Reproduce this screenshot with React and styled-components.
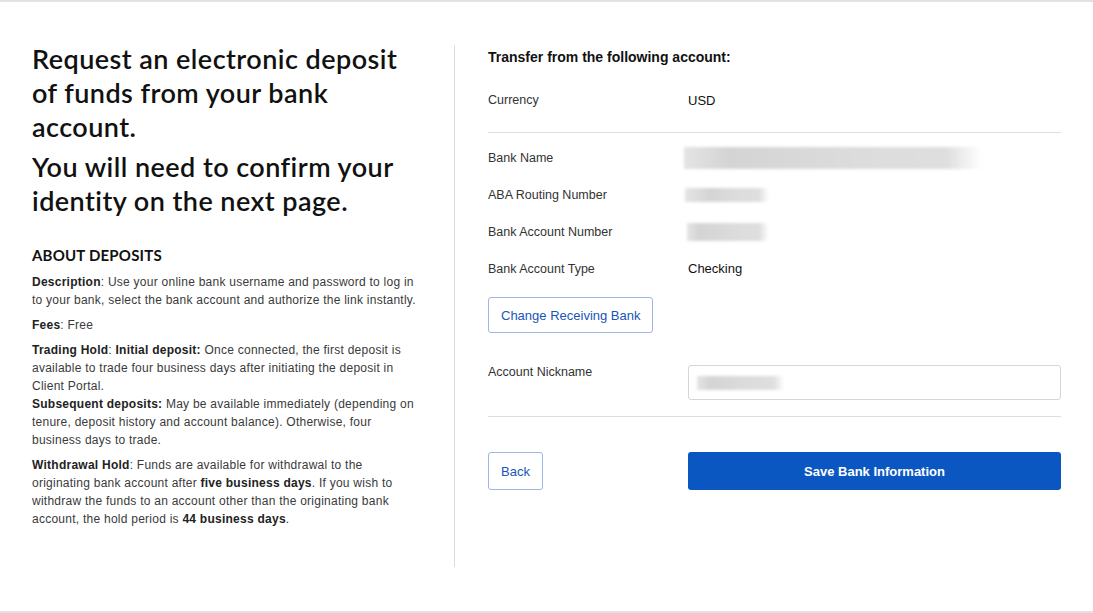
import React from "react";
import styled, { createGlobalStyle } from "styled-components";

const GlobalStyle = createGlobalStyle`
    html, body {
        margin: 0;
        padding: 0;
        background: #ffffff;
    }
    body {
        font-family: "Liberation Sans", Arial, sans-serif;
        color: #222;
    }
`;

const Page = styled.div`
    box-sizing: border-box;
    height: 613px;
    border-top: 2px solid #e2e2e2;
    border-bottom: 2px solid #e2e2e2;
    background: #fff;
`;

const Layout = styled.div`
    display: flex;
    padding: 43px 32px 0 32px;
`;

const InfoColumn = styled.section`
    box-sizing: border-box;
    width: 423px;
    height: 522px;
    padding-right: 30px;
    border-right: 1px solid #dcdcdc;
`;

const Intro = styled.div`
    margin-top: -3px;
`;

const Lead = styled.h1`
    margin: 0 0 6px;
    max-width: 390px;
    font-family: "Lato", "Open Sans", sans-serif;
    font-size: 27px;
    font-weight: 600;
    letter-spacing: 0.45px;
    line-height: 34px;
    color: #111;
`;

const SectionTitle = styled.h2`
    margin: 28px 0 9px;
    font-family: "Lato", sans-serif;
    font-size: 15px;
    font-weight: 700;
    letter-spacing: 0.2px;
    color: #111;
`;

const Para = styled.p`
    margin: 0 0 ${(p) => (p.$tight ? "0" : "7px")};
    font-size: 12px;
    line-height: 18px;
    letter-spacing: 0.25px;
    color: #3a3a3a;

    b {
        color: #222;
    }
`;

const FormColumn = styled.section`
    flex: 1;
    padding-left: 33px;
`;

const FormTitle = styled.h3`
    margin: 4px 0 18px;
    font-size: 14px;
    font-weight: 700;
    color: #111;
`;

const Row = styled.div`
    display: grid;
    grid-template-columns: 200px 1fr;
    align-items: center;
    min-height: ${(p) => p.$h || 37}px;
    font-size: 12.5px;
`;

const Label = styled.span`
    color: #333;
    align-self: ${(p) => (p.$top ? "start" : "center")};
`;

const Value = styled.span`
    color: #111;
    font-size: 13px;
`;

const Divider = styled.hr`
    border: 0;
    border-top: 1px solid #dedede;
    margin: ${(p) => p.$m || "0"};
`;

// redacted value bar, softened so the digits can't be read
const Masked = styled.div`
    width: ${(p) => p.$w}px;
    height: ${(p) => p.$h}px;
    margin-left: ${(p) => p.$x || 0}px;
    background: linear-gradient(
        90deg,
        #e4e4e4 0%,
        #d4d4d4 ${(p) => (p.$short ? 30 : 15)}%,
        #dcdcdc 60%,
        #dedede 88%,
        rgba(255, 255, 255, 0.6) 100%
    );
    filter: blur(1.5px);
`;

const OutlineButton = styled.button`
    box-sizing: border-box;
    height: ${(p) => p.$h || 36}px;
    padding: 0 12px;
    background: #fff;
    border: 1px solid #9db6e6;
    border-radius: 3px;
    color: #1a55b8;
    font-family: "Liberation Sans", Arial, sans-serif;
    font-size: 13px;
    cursor: pointer;
`;

const ButtonRow = styled.div`
    margin: 10px 0 32px;
`;

const NickRow = styled.div`
    display: grid;
    grid-template-columns: 200px 1fr;
    margin-bottom: 16px;
    font-size: 12.5px;
`;

const Field = styled.div`
    box-sizing: border-box;
    height: 35px;
    border: 1px solid #d6d6d6;
    border-radius: 3px;
    padding: 10px 8px;
`;

const Actions = styled.div`
    display: grid;
    grid-template-columns: 200px 1fr;
    margin-top: 35px;
`;

const PrimaryButton = styled.button`
    height: 38px;
    border: 0;
    border-radius: 3px;
    background: #0b57c2;
    color: #fff;
    font-family: "Liberation Sans", Arial, sans-serif;
    font-size: 13px;
    font-weight: 700;
    cursor: pointer;
`;

const App = () => {
    return (
        <Page>
            <GlobalStyle />
            <Layout>
                <InfoColumn>
                    <Intro>
                        <Lead>Request an electronic deposit of funds from your bank account.</Lead>
                        <Lead>You will need to confirm your identity on the next page.</Lead>
                    </Intro>
                    <SectionTitle>ABOUT DEPOSITS</SectionTitle>
                    <Para>
                        <b>Description</b>: Use your online bank username and password to log in to your bank,
                        select the bank account and authorize the link instantly.
                    </Para>
                    <Para>
                        <b>Fees</b>: Free
                    </Para>
                    <Para $tight>
                        <b>Trading Hold</b>: <b>Initial deposit:</b> Once connected, the first deposit is
                        available to trade four business days after initiating the deposit in Client Portal.
                    </Para>
                    <Para>
                        <b>Subsequent deposits:</b> May be available immediately (depending on tenure, deposit
                        history and account balance). Otherwise, four business days to trade.
                    </Para>
                    <Para>
                        <b>Withdrawal Hold</b>: Funds are available for withdrawal to the originating bank
                        account after <b>five business days</b>. If you wish to withdraw the funds to an
                        account other than the originating bank account, the hold period is{" "}
                        <b>44 business days</b>.
                    </Para>
                </InfoColumn>

                <FormColumn>
                    <FormTitle>Transfer from the following account:</FormTitle>
                    <Row $h={34}>
                        <Label>Currency</Label>
                        <Value>USD</Value>
                    </Row>
                    <Divider $m="15px 0 6px" />
                    <Row>
                        <Label>Bank Name</Label>
                        <Masked $w={298} $h={22} $x={-4} />
                    </Row>
                    <Row>
                        <Label>ABA Routing Number</Label>
                        <Masked $w={84} $h={14} $x={-3} $short />
                    </Row>
                    <Row>
                        <Label>Bank Account Number</Label>
                        <Masked $w={82} $h={18} $x={-1} />
                    </Row>
                    <Row>
                        <Label>Bank Account Type</Label>
                        <Value>Checking</Value>
                    </Row>
                    <ButtonRow>
                        <OutlineButton>Change Receiving Bank</OutlineButton>
                    </ButtonRow>
                    <NickRow>
                        <Label $top>Account Nickname</Label>
                        <Field>
                            <Masked $w={87} $h={14} />
                        </Field>
                    </NickRow>
                    <Divider />
                    <Actions>
                        <div>
                            <OutlineButton $h={38}>Back</OutlineButton>
                        </div>
                        <PrimaryButton>Save Bank Information</PrimaryButton>
                    </Actions>
                </FormColumn>
            </Layout>
        </Page>
    );
};

export default App;
